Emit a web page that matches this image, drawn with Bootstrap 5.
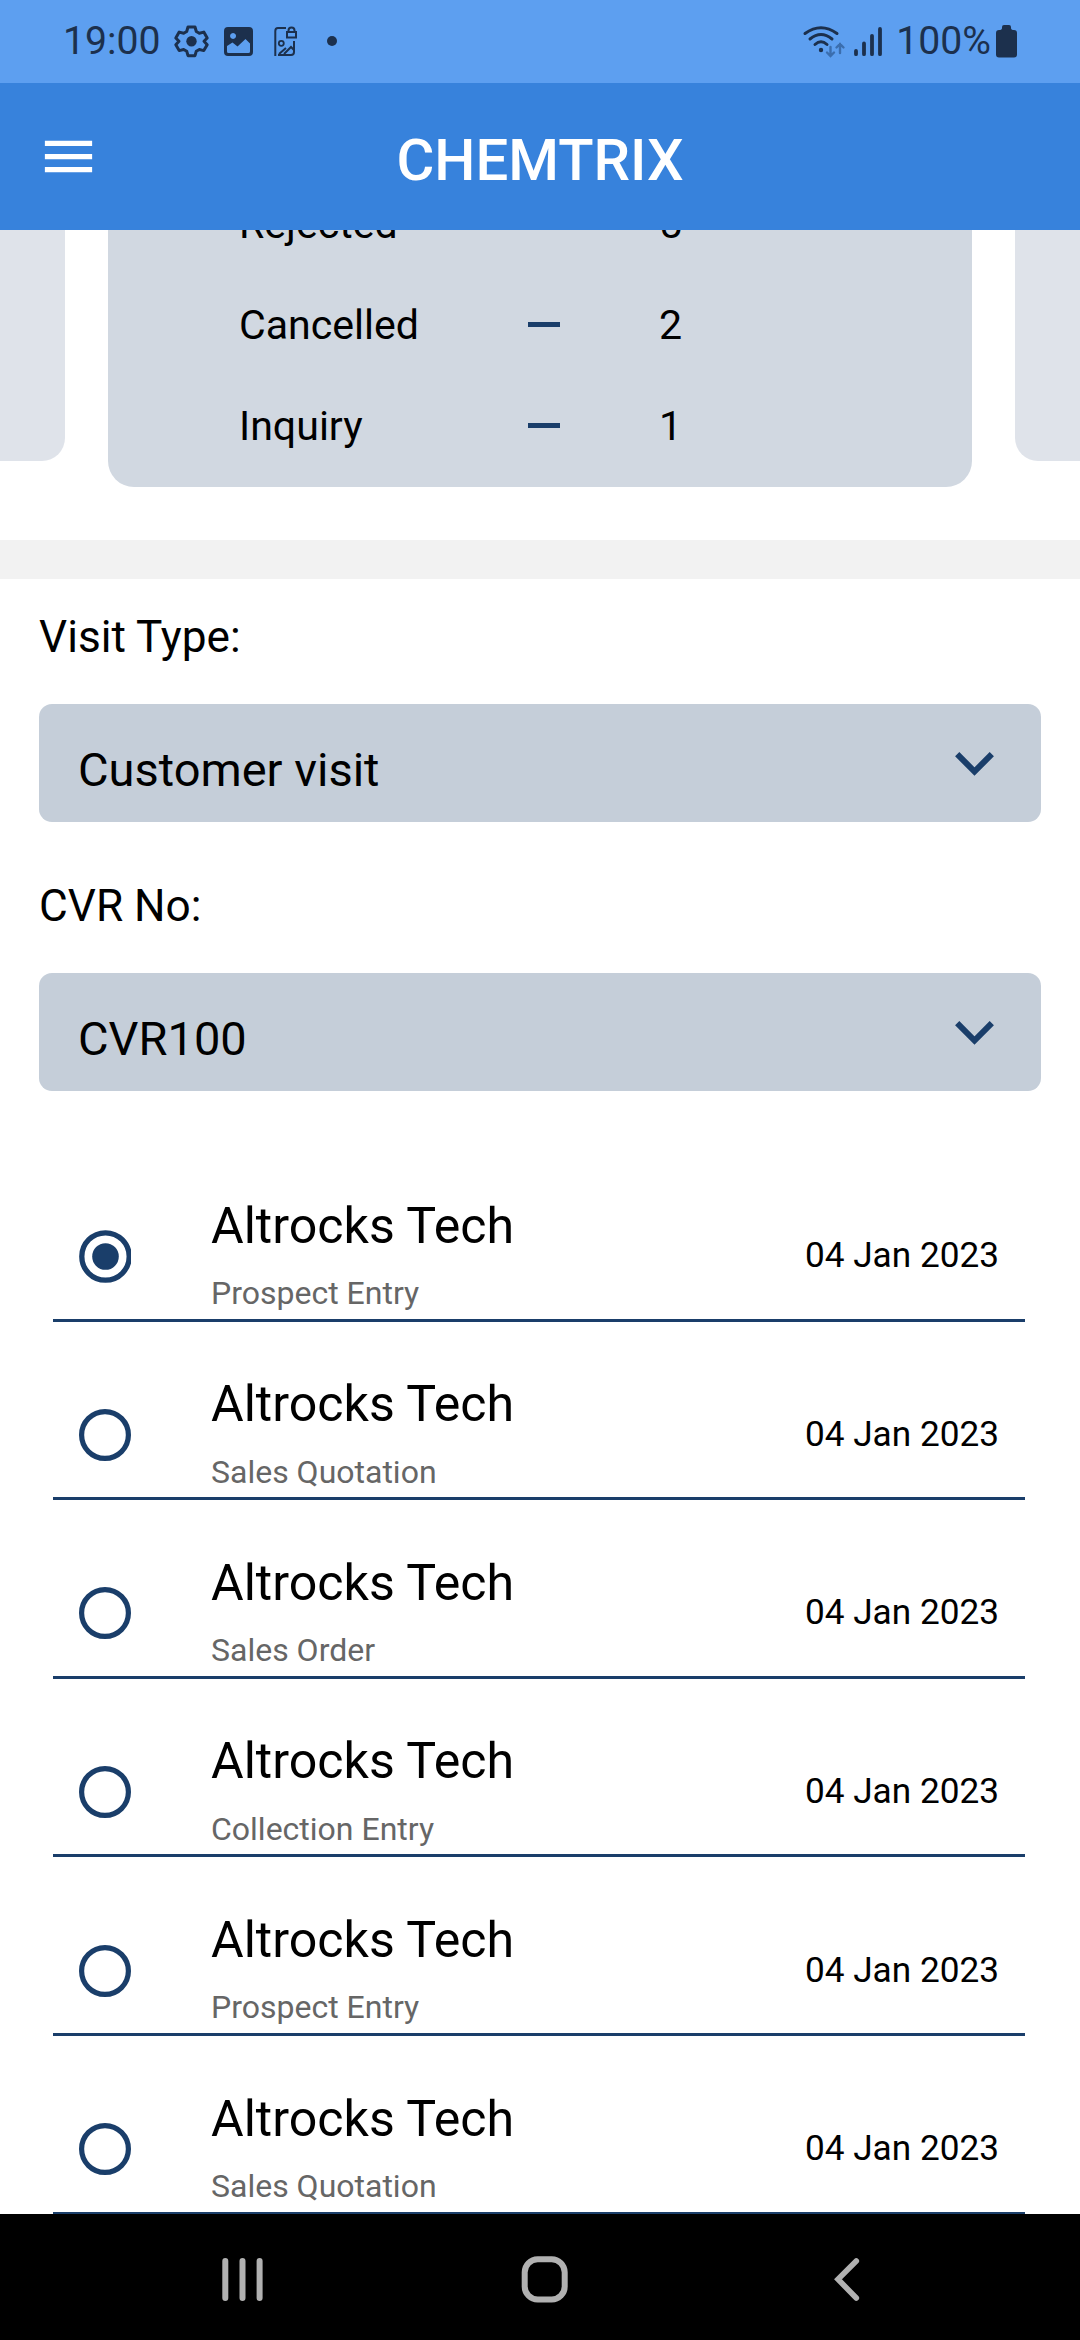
<!DOCTYPE html>
<html lang="en">
<head>
<meta charset="utf-8">
<meta name="viewport" content="width=device-width, initial-scale=1">
<title>Chemtrix</title>
<link rel="stylesheet" href="https://cdn.jsdelivr.net/npm/bootstrap@5.3.0/dist/css/bootstrap.min.css">
<style>
  :root { --navy: #1a3e6a; --status-ink: #1c304d; }
  body { font-family: Roboto, "Noto Sans", sans-serif; color: #000; }
  svg { display: block; flex: none; }
  .phone { width: 1080px; height: 2340px; }
  .status-bar { height: 83px; background: #5d9ff0; color: var(--status-ink); font-size: 39.2px; line-height: 83px; }
  .clock { width: 113px; padding-left: 63px; }
  .app-bar { height: 147px; background: #3782dc; padding: 0 37px; }
  .app-title { font-size: 58px; font-weight: 500; line-height: 60px; padding-top: 6px; }
  .app-side { width: 63px; }
  .screen-body { min-height: 0; }
  .carousel-strip { height: 310px; }
  .side-card { width: 65px; height: 231px; background: #dfe3ea; }
  .side-left { border-bottom-right-radius: 23px; }
  .side-right { border-bottom-left-radius: 23px; }
  .status-card { width: 864px; height: 257px; background: #d1d8e1; border-radius: 0 0 26px 26px; padding: 0 0 10px 131px; }
  .stat-row { height: 101px; font-size: 41.1px; line-height: 101px; }
  .stat-name { width: 289px; }
  .stat-dash { width: 32px; height: 5px; background: var(--navy); margin: 0 99px 3px 0; }
  .divider-band { height: 39px; background: #f2f2f2; }
  .visit-form { padding: 0 39px; margin-top: -9px; }
  .field-label { font-size: 44.2px; line-height: 134px; }
  .picker { height: 118px; background: #c5ced9; border-radius: 13px; padding: 0 47px 0 39px; font-size: 47px; }
  .picker-text { line-height: 104px; padding-top: 14px; }
  .picker svg { margin-top: 2px; }
  .second-label { margin-top: 17px; }
  .visit-list { margin: 52px 55px 0 53px; }
  .visit-row { height: 178.6px; border-bottom: 3px solid var(--navy); padding: 51px 26px 0 26px; }
  .visit-text { margin-top: -4px; }
  .visit-name { font-size: 50.1px; line-height: 60px; margin-left: 80px; }
  .visit-kind { font-size: 32px; line-height: 40px; color: #666; margin: 17.5px 0 0 80px; }
  .visit-date { font-size: 35.2px; line-height: 42px; margin-top: -2px; }
  .nav-keys { height: 126px; background: #000; padding-top: 2px; }
</style>
</head>
<body>
<div class="phone d-flex flex-column overflow-hidden bg-white">
  <div class="status-bar d-flex flex-shrink-0">
    <span class="clock flex-shrink-0 text-nowrap">19:00</span>
    <svg class="ms-5" width="232" height="83" viewBox="161 0 232 83" fill="none" stroke="#1c304d">
      <path d="M188 27h7l1.300 4.500 3 1.700 4.500-1.100 3.400 5.900-3.200 3.300 0 0 3.200 3.400-3.400 5.900-4.500-1.100-3 1.700-1.300 4.500h-7l-1.300-4.500-3-1.700-4.500 1.100-3.400-5.900 3.200-3.400 0 0-3.200-3.300 3.400-5.900 4.500 1.100 3-1.700z" stroke-width="3" stroke-linejoin="round"/>
      <circle cx="191.500" cy="41.300" r="5.200" fill="#1c304d" stroke="none"/>
      <path d="M228 27h21q4 0 4 4v21q0 4-4 4h-21q-4 0-4-4v-21q0-4 4-4zM227 46v5.500q0 1.500 1.500 1.500h20q1.500 0 1.500-1.500v-8l-4.500-4.500-8 7.500-5-4zM233 33a3 3 0 1 0 .1 0z" fill="#1c304d" fill-rule="evenodd" stroke="none"/>
      <path d="M286 28h-8q-2.700 0-2.700 3v25M278 55h13q3 0 3-3V41M279 54l7-6M284 54l7-7 3 3" stroke-width="2"/>
      <circle cx="281.300" cy="43.300" r="2.500" stroke-width="1.800"/>
      <path d="M287 32h9v5.500h-9zM288.500 32v-1.500a3 3 0 0 1 6 0v1.500" stroke-width="2"/>
      <circle cx="332" cy="41" r="5" fill="#1c304d" stroke="none"/>
    </svg>
    <svg class="ms-auto" width="97" height="83" viewBox="798 0 97 83" fill="none" stroke="#1c304d" stroke-linecap="round">
      <path d="M804 33.500q16-11.500 32 0M809 39q11-9 22 0M814 44.500q6-5.500 12 0" stroke-width="3"/>
      <circle cx="820" cy="50" r="2.200" fill="#1c304d" stroke="none"/>
      <path d="M829.500 47v8.500M826 52.500l3.500 3.500 3.500-3.500M839 53v-9M835.500 47.500l3.500-3.500 3.500 3.500" stroke="#3b6eae" stroke-width="2.400"/>
      <path d="M855 51v3.200M863 43.500v10.700M871 35.800v18.400M879 29v25.200" stroke-width="3.800"/>
    </svg>
    <span class="text-nowrap">100%</span>
    <svg width="89" height="83" viewBox="991 0 89 83" fill="#1c304d"><path d="M1002 28v-1q0-2 2-2h5q2 0 2 2v1q0 2 3 2 3 0 3 3v21.500q0 3-3 3h-15q-3 0-3-3V33q0-3 3-3t3-2z"/></svg>
  </div>

  <header class="app-bar d-flex align-items-center justify-content-between flex-shrink-0 text-white">
    <svg width="63" height="63" viewBox="0 0 24 24" fill="#fff"><path d="M3 18h18v-2H3zm0-5h18v-2H3zm0-7v2h18V6z"/></svg>
    <div class="app-title">CHEMTRIX</div>
    <div class="app-side"></div>
  </header>

  <main class="screen-body flex-grow-1 overflow-hidden">
    <section class="carousel-strip d-flex justify-content-between overflow-hidden">
      <div class="side-card side-left"></div>
      <div class="status-card d-flex flex-column justify-content-end overflow-hidden">
        <div class="stat-row d-flex align-items-center flex-shrink-0"><span class="stat-name">Rejected</span><span class="stat-dash"></span><span>5</span></div>
        <div class="stat-row d-flex align-items-center flex-shrink-0"><span class="stat-name">Cancelled</span><span class="stat-dash"></span><span>2</span></div>
        <div class="stat-row d-flex align-items-center flex-shrink-0"><span class="stat-name">Inquiry</span><span class="stat-dash"></span><span>1</span></div>
      </div>
      <div class="side-card side-right"></div>
    </section>
    <div class="divider-band"></div>

    <section class="visit-form">
      <div class="field-label">Visit Type:</div>
      <div class="picker d-flex align-items-center justify-content-between">
        <span class="picker-text">Customer visit</span>
        <svg width="39" height="26" viewBox="0 0 39 26" fill="none" stroke="#1a3e6a" stroke-width="6"><path d="M2.200 3.200 19.500 20.500 36.800 3.200"/></svg>
      </div>
      <div class="field-label second-label">CVR No:</div>
      <div class="picker d-flex align-items-center justify-content-between">
        <span class="picker-text">CVR100</span>
        <svg width="39" height="26" viewBox="0 0 39 26" fill="none" stroke="#1a3e6a" stroke-width="6"><path d="M2.200 3.200 19.500 20.500 36.800 3.200"/></svg>
      </div>
    </section>

    <section class="visit-list">
      <div class="visit-row d-flex align-items-center">
        <svg width="52" height="53" viewBox="0 0 52 53" fill="none" stroke="#1a3e6a"><circle cx="26.500" cy="26.500" r="23.700" stroke-width="5.300"/><circle cx="26.500" cy="26.500" r="13.300" fill="#1a3e6a" stroke="none"/></svg>
        <div class="visit-text flex-grow-1"><div class="visit-name">Altrocks Tech</div><div class="visit-kind">Prospect Entry</div></div>
        <div class="visit-date">04 Jan 2023</div>
      </div>
      <div class="visit-row d-flex align-items-center">
        <svg width="52" height="52" viewBox="0 0 52 52" fill="none" stroke="#1a3e6a"><circle cx="26" cy="26" r="23.400" stroke-width="5.200"/></svg>
        <div class="visit-text flex-grow-1"><div class="visit-name">Altrocks Tech</div><div class="visit-kind">Sales Quotation</div></div>
        <div class="visit-date">04 Jan 2023</div>
      </div>
      <div class="visit-row d-flex align-items-center">
        <svg width="52" height="52" viewBox="0 0 52 52" fill="none" stroke="#1a3e6a"><circle cx="26" cy="26" r="23.400" stroke-width="5.200"/></svg>
        <div class="visit-text flex-grow-1"><div class="visit-name">Altrocks Tech</div><div class="visit-kind">Sales Order</div></div>
        <div class="visit-date">04 Jan 2023</div>
      </div>
      <div class="visit-row d-flex align-items-center">
        <svg width="52" height="52" viewBox="0 0 52 52" fill="none" stroke="#1a3e6a"><circle cx="26" cy="26" r="23.400" stroke-width="5.200"/></svg>
        <div class="visit-text flex-grow-1"><div class="visit-name">Altrocks Tech</div><div class="visit-kind">Collection Entry</div></div>
        <div class="visit-date">04 Jan 2023</div>
      </div>
      <div class="visit-row d-flex align-items-center">
        <svg width="52" height="52" viewBox="0 0 52 52" fill="none" stroke="#1a3e6a"><circle cx="26" cy="26" r="23.400" stroke-width="5.200"/></svg>
        <div class="visit-text flex-grow-1"><div class="visit-name">Altrocks Tech</div><div class="visit-kind">Prospect Entry</div></div>
        <div class="visit-date">04 Jan 2023</div>
      </div>
      <div class="visit-row d-flex align-items-center">
        <svg width="52" height="52" viewBox="0 0 52 52" fill="none" stroke="#1a3e6a"><circle cx="26" cy="26" r="23.400" stroke-width="5.200"/></svg>
        <div class="visit-text flex-grow-1"><div class="visit-name">Altrocks Tech</div><div class="visit-kind">Sales Quotation</div></div>
        <div class="visit-date">04 Jan 2023</div>
      </div>
    </section>
  </main>

  <nav class="nav-keys flex-shrink-0">
    <svg width="1080" height="124" viewBox="0 2216 1080 124" fill="none" stroke="#b1b1b1" stroke-width="6" stroke-linecap="round">
      <path d="M225.300 2261v37M242.500 2261v37M259.600 2261v37"/>
      <rect x="524.700" y="2259.200" width="40" height="40.300" rx="13"/>
      <path d="M856.300 2261 838 2279.300 856.300 2298" stroke-width="5.600"/>
    </svg>
  </nav>
</div>
<script src="https://cdn.jsdelivr.net/npm/bootstrap@5.3.0/dist/js/bootstrap.bundle.min.js"></script>
</body>
</html>
